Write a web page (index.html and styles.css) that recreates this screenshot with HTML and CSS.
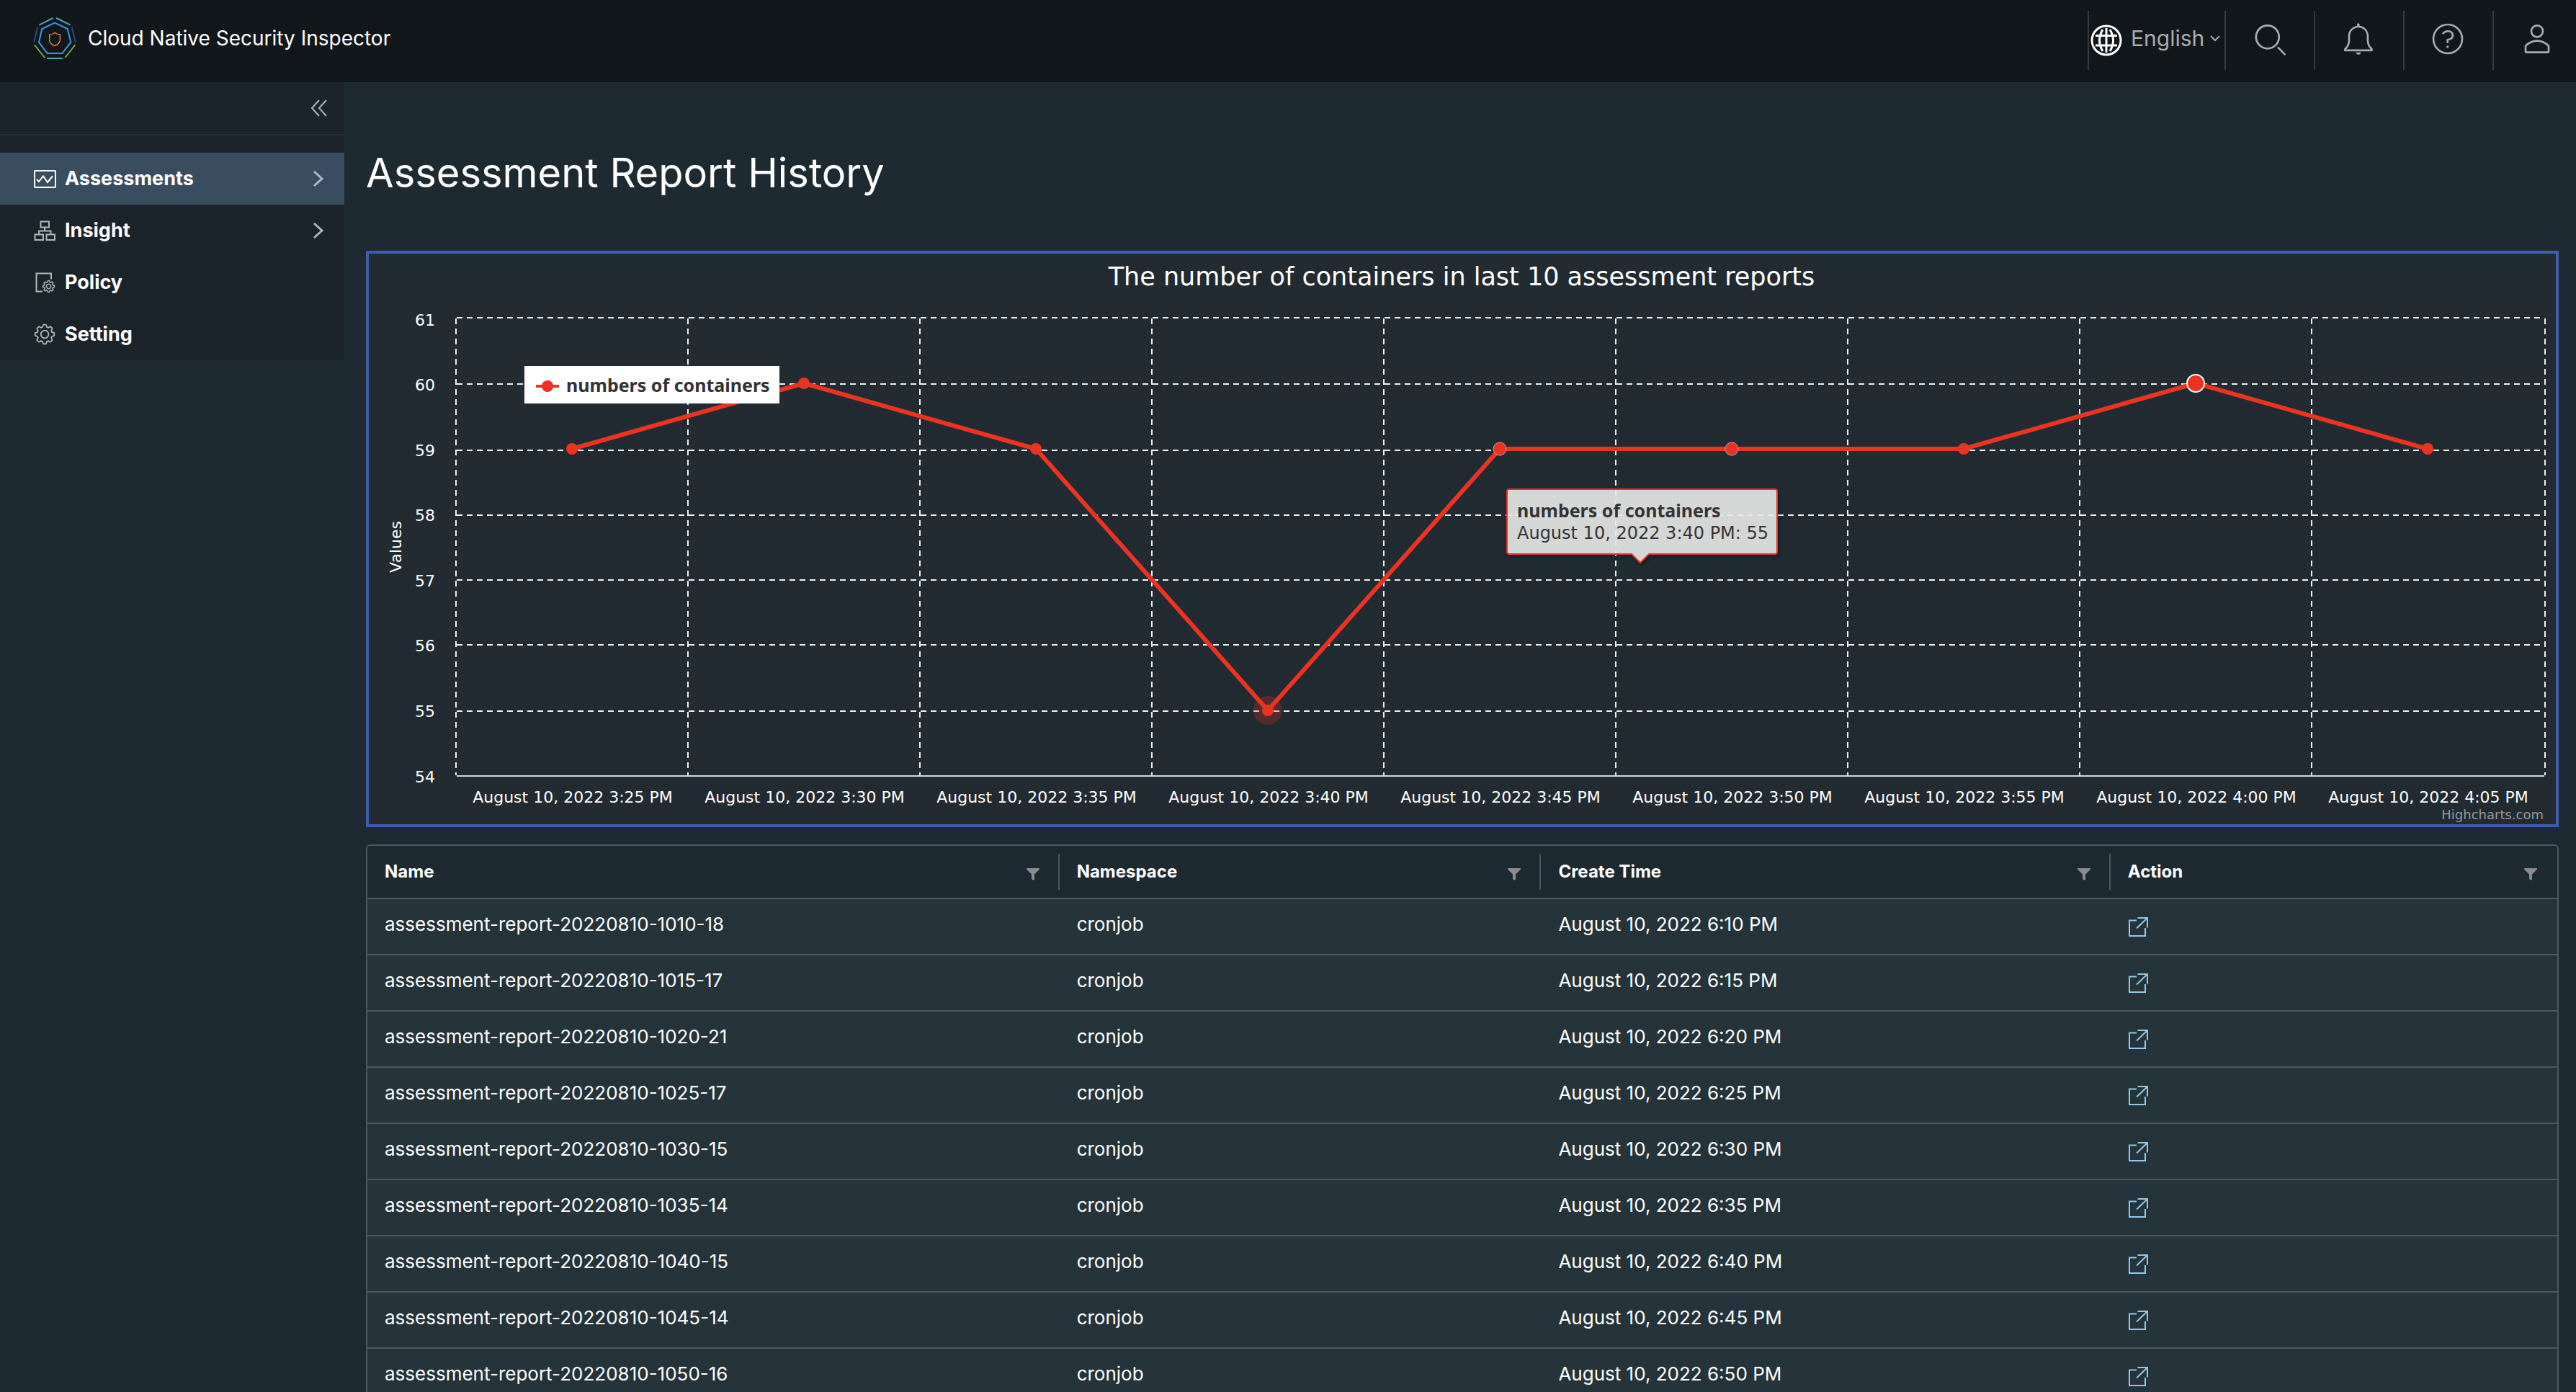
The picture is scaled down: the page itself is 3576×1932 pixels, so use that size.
FILE: index.html
```html
<!DOCTYPE html>
<html lang="en">
<head>
<meta charset="utf-8">
<meta name="viewport" content="width=device-width, initial-scale=1">
<title>Cloud Native Security Inspector</title>
<link rel="stylesheet" href="styles.css">
</head>
<body>
<svg class="sprite" aria-hidden="true">
  <symbol id="gear" viewBox="0 0 36 36">
    <path d="M18.1,11c-3.9,0-7,3.1-7,7s3.1,7,7,7c3.9,0,7-3.1,7-7S22,11,18.1,11z M18.1,23c-2.8,0-5-2.2-5-5s2.2-5,5-5c2.8,0,5,2.2,5,5S20.9,23,18.1,23z"/>
    <path d="M32.8,14.7L30,13.8l-0.6-1.5l1.4-2.6c0.3-0.6,0.2-1.4-0.3-1.9l-2.4-2.4c-0.5-0.5-1.3-0.6-1.9-0.3l-2.6,1.4l-1.5-0.6l-0.9-2.8C21,2.5,20.4,2,19.7,2h-3.4c-0.7,0-1.3,0.5-1.4,1.2L14,6c-0.6,0.1-1.1,0.3-1.6,0.6L9.8,5.2C9.2,4.9,8.4,5,7.9,5.5L5.5,7.9C5,8.4,4.9,9.2,5.2,9.8l1.3,2.5c-0.2,0.5-0.4,1.1-0.6,1.6l-2.8,0.9C2.5,15,2,15.6,2,16.3v3.4c0,0.7,0.5,1.3,1.2,1.5L6,22.1l0.6,1.5l-1.4,2.6c-0.3,0.6-0.2,1.4,0.3,1.9l2.4,2.4c0.5,0.5,1.3,0.6,1.9,0.3l2.6-1.4l1.5,0.6l0.9,2.9c0.2,0.6,0.8,1.1,1.5,1.1h3.4c0.7,0,1.3-0.5,1.5-1.1l0.9-2.9l1.5-0.6l2.6,1.4c0.6,0.3,1.4,0.2,1.9-0.3l2.4-2.4c0.5-0.5,0.6-1.3,0.3-1.9l-1.4-2.6l0.6-1.5l2.9-0.9c0.6-0.2,1.1-0.8,1.1-1.5v-3.4C34,15.6,33.5,14.9,32.8,14.7z M32,19.4l-3.6,1.1L28.3,21c-0.3,0.7-0.6,1.4-0.9,2.1l-0.3,0.5l1.8,3.3l-2,2l-3.3-1.8l-0.5,0.3c-0.7,0.4-1.4,0.7-2.1,0.9l-0.5,0.1L19.4,32h-2.8l-1.1-3.6L15,28.3c-0.7-0.3-1.4-0.6-2.1-0.9l-0.5-0.3l-3.3,1.8l-2-2l1.8-3.3l-0.3-0.5c-0.4-0.7-0.7-1.4-0.9-2.1l-0.1-0.5L4,19.4v-2.8l3.4-1l0.2-0.5c0.2-0.8,0.5-1.5,0.9-2.2l0.3-0.5L7.1,9.1l2-2l3.2,1.8l0.5-0.3c0.7-0.4,1.4-0.7,2.2-0.9l0.5-0.2L16.6,4h2.8l1.1,3.5L21,7.7c0.7,0.2,1.4,0.5,2.1,0.9l0.5,0.3l3.3-1.8l2,2l-1.8,3.3l0.3,0.5c0.4,0.7,0.7,1.4,0.9,2.1l0.1,0.5l3.6,1.1V19.4z"/>
  </symbol>
  <symbol id="caret" viewBox="0 0 32 32"><path class="line-thick" d="M10 6 L21 16 L10 26"/></symbol>
  <symbol id="funnel" viewBox="0 0 18 18"><path d="M0 1H18V2.500L11 9.500V17L9 17.500L7 16V9.500L0 2.500Z"/></symbol>
  <symbol id="popout" viewBox="0 0 28 28"><path class="line" d="M12 5.500H2V27H24V16M13.500 2H27V15.500M27 2L12 16.500"/></symbol>
</svg>

<div class="app">
  <header class="header">
    <a class="brand" href="#">
      <svg class="logo" viewBox="48 36 180 180" aria-hidden="true">
        <g fill="none" stroke-width="6">
          <path stroke="#49a5b5" d="M73 71L131 42M144 42L203 71M105 210H171"/>
          <path stroke="#28468f" d="M66 80L52 143M209 80L225 143"/>
          <path stroke="#79a83a" d="M54 154L96 207M223 154L181 207"/>
          <path stroke="#3c96e6" d="M138 62L191 87L205 143L169 189H107L72 143L85 87Z"/>
          <path stroke="#ef8245" stroke-width="4" d="M138 103L147 108Q154 111 160 111V136Q158 149 138 158Q118 149 116 136V111Q122 111 130 108Z"/>
        </g>
      </svg>
      <span>Cloud Native Security Inspector</span>
    </a>
    <div class="tools">
      <div class="tool tool-lang">
        <svg class="globe" viewBox="0 0 44 44" aria-hidden="true">
          <circle cx="22" cy="22" r="20"/>
          <path d="M22 5V39M7 15.500H37M7 29H37M17 7Q8 22 17 37M27 7Q36 22 27 37"/>
        </svg>
        <select class="lang" aria-label="Language"><option>English</option></select>
        <svg class="lang-caret" viewBox="0 0 16 10" aria-hidden="true"><path d="M2 2L8 8L14 2"/></svg>
      </div>
      <button class="tool" aria-label="Search">
        <svg class="tool-icon" viewBox="0 0 36 36"><path d="M16.330,5.050A10.950,10.950,0,1,1,5.390,16,11,11,0,0,1,16.330,5.050m0-2.050a13,13,0,1,0,13,13,13,13,0,0,0-13-13Z"/><path d="M35,33.290l-7.370-7.420-1.420,1.410,7.370,7.420A1,1,0,1,0,35,33.290Z"/></svg>
      </button>
      <button class="tool" aria-label="Notifications">
        <svg class="tool-icon" viewBox="0 0 36 36"><path d="M32.510,27.830A14.400,14.400,0,0,1,30,24.900a12.630,12.630,0,0,1-1.350-4.810V15.150A10.810,10.810,0,0,0,19.210,4.400V3.110a1.330,1.330,0,1,0-2.670,0V4.420A10.810,10.810,0,0,0,7.210,15.150v4.940A12.630,12.630,0,0,1,5.860,24.900a14.400,14.400,0,0,1-2.470,2.930,1,1,0,0,0-.34.750v1.360a1,1,0,0,0,1,1h27.800a1,1,0,0,0,1-1V28.580A1,1,0,0,0,32.510,27.830ZM5.130,28.940a16.170,16.170,0,0,0,2.440-3,14.240,14.240,0,0,0,1.650-5.850V15.150a8.740,8.740,0,1,1,17.470,0v4.940a14.240,14.240,0,0,0,1.650,5.850,16.170,16.170,0,0,0,2.440,3Z"/><path d="M18,34.280A2.670,2.670,0,0,0,20.580,32H15.320A2.670,2.670,0,0,0,18,34.280Z"/></svg>
      </button>
      <button class="tool" aria-label="Help">
        <svg class="tool-icon" viewBox="0 0 36 36"><path d="M18,2A16,16,0,1,0,34,18,16,16,0,0,0,18,2Zm0,30A14,14,0,1,1,32,18,14,14,0,0,1,18,32Z"/><path d="M18.290,8.920a7.380,7.380,0,0,0-5.720,2.570,1,1,0,0,0-.32.710.92.920,0,0,0,.95.920,1.080,1.080,0,0,0,.71-.29,5.700,5.700,0,0,1,4.330-2c2.360,0,3.830,1.520,3.830,3.410v.05c0,2.210-1.760,3.440-4.540,3.650a.8.800,0,0,0-.76.920s0,2.320,0,2.750a1,1,0,0,0,1,.9h.11a1,1,0,0,0,.9-1V19.450c3-.42,5.430-2,5.430-5.280v-.05C24.180,11.120,21.840,8.920,18.290,8.920Z"/><circle cx="17.780" cy="26.200" r="1.250"/></svg>
      </button>
      <button class="tool" aria-label="Account">
        <svg class="tool-icon" viewBox="0 0 36 36"><path d="M18,17a7,7,0,1,0-7-7A7,7,0,0,0,18,17ZM18,5a5,5,0,1,1-5,5A5,5,0,0,1,18,5Z"/><path d="M30.470,24.370a17.160,17.160,0,0,0-24.930,0A2,2,0,0,0,5,25.740V31a2,2,0,0,0,2,2H29a2,2,0,0,0,2-2V25.740A2,2,0,0,0,30.470,24.370ZM29,31H7V25.730a15.170,15.170,0,0,1,22,0h0Z"/></svg>
      </button>
    </div>
  </header>

  <div class="body">
    <nav class="sidebar" aria-label="Main">
      <button class="collapse" aria-label="Collapse menu">
        <svg class="nav-icon" viewBox="0 0 32 32"><path class="line" d="M17 5L7 16L17 27M27 5L17 16L27 27"/></svg>
      </button>
      <ul class="nav">
        <li><a class="nav-link is-active" href="#">
          <svg class="nav-icon" viewBox="0 0 32 32"><rect class="line" x="2" y="5" width="29" height="23" rx="1"/><path class="line" d="M5 17L8 20L14 12.500L20 21L27 12.500"/></svg>
          <span>Assessments</span><svg class="nav-caret"><use href="#caret"/></svg></a></li>
        <li><a class="nav-link" href="#">
          <svg class="nav-icon" viewBox="0 0 32 32"><path class="line" d="M10.500 3.500H22V11.500H10.500ZM2.500 21.500H14V29H2.500ZM18.500 21.500H30V29H18.500ZM16 11.500V16.500M8 21V16.500H24.500V21"/></svg>
          <span>Insight</span><svg class="nav-caret"><use href="#caret"/></svg></a></li>
        <li><a class="nav-link" href="#">
          <svg class="nav-icon" viewBox="0 0 32 32"><path class="line" d="M25 11.500V3.500H4.500V28.500H13"/><use class="bold-gear" href="#gear" x="12" y="12" width="19" height="19"/></svg>
          <span>Policy</span></a></li>
        <li><a class="nav-link" href="#">
          <svg class="nav-icon"><use href="#gear"/></svg>
          <span>Setting</span></a></li>
      </ul>
    </nav>

    <main class="main">
      <h1 class="title">Assessment Report History</h1>

      <section class="chart">
        <svg class="chart-svg" viewBox="0 0 3036 792" role="img" aria-label="The number of containers in last 10 assessment reports">
          <path class="grid" d="M121 90V724M443 90V724M765 90V724M1087 90V724M1409 90V724M1731 90V724M2053 90V724M2375 90V724M2697 90V724M3021 90V724"/>
          <path class="grid" d="M122 89H3020M122 181H3020M122 273H3020M122 363H3020M122 453H3020M122 543H3020M122 635H3020"/>
          <path class="axis" d="M122 725H3020"/>
          <text class="chart-title" x="1517" y="44">The number of containers in last 10 assessment reports</text>
          <text class="axis-title" transform="translate(45 407) rotate(-90)">Values</text>
          <g class="y-labels">
            <text x="92" y="100">61</text><text x="92" y="190">60</text><text x="92" y="281">59</text><text x="92" y="371">58</text>
            <text x="92" y="462">57</text><text x="92" y="552">56</text><text x="92" y="643">55</text><text x="92" y="734">54</text>
          </g>
          <g class="x-labels">
            <text x="283" y="762">August 10, 2022 3:25 PM</text>
            <text x="605" y="762">August 10, 2022 3:30 PM</text>
            <text x="927" y="762">August 10, 2022 3:35 PM</text>
            <text x="1249" y="762">August 10, 2022 3:40 PM</text>
            <text x="1571" y="762">August 10, 2022 3:45 PM</text>
            <text x="1893" y="762">August 10, 2022 3:50 PM</text>
            <text x="2215" y="762">August 10, 2022 3:55 PM</text>
            <text x="2537" y="762">August 10, 2022 4:00 PM</text>
            <text x="2859" y="762">August 10, 2022 4:05 PM</text>
          </g>
          <polyline class="series" points="282,271 604,180 926,271 1248,634 1570,271 1892,271 2214,271 2536,180 2858,271"/>
          <g class="points">
            <circle class="halo" cx="1248" cy="634" r="20"/>
            <circle cx="282" cy="271" r="8"/><circle cx="604" cy="180" r="8"/><circle cx="926" cy="271" r="8"/>
            <circle cx="1248" cy="634" r="8"/>
            <circle class="fading" cx="1570" cy="271" r="9"/><circle class="fading" cx="1892" cy="271" r="9"/>
            <circle cx="2214" cy="271" r="8"/>
            <circle class="hover" cx="2536" cy="180" r="12"/>
            <circle cx="2858" cy="271" r="8"/>
          </g>
          <g class="legend">
            <rect x="216" y="156" width="354" height="52"/>
            <path d="M232 184H264"/>
            <circle cx="248" cy="184" r="8"/>
            <text x="274" y="192">numbers of containers</text>
          </g>
          <g class="tooltip">
            <path d="M1583 327H1952Q1955 327 1955 330V414Q1955 417 1952 417H1777L1765 429L1753 417H1583Q1580 417 1580 414V330Q1580 327 1583 327Z"/>
            <text class="strong" x="1594" y="366">numbers of containers</text>
            <text x="1594" y="396">August 10, 2022 3:40 PM: 55</text>
          </g>
          <a href="#"><text class="credits" x="3019" y="785">Highcharts.com</text></a>
        </svg>
      </section>

      <div class="grid-wrap">
        <table class="reports">
          <colgroup><col class="col-name"><col class="col-ns"><col class="col-time"><col></colgroup>
          <thead>
            <tr>
              <th scope="col"><div class="head">Name<button class="filter" aria-label="Filter by name"><svg><use href="#funnel"/></svg></button></div></th>
              <th scope="col"><div class="head">Namespace<button class="filter" aria-label="Filter by namespace"><svg><use href="#funnel"/></svg></button></div></th>
              <th scope="col"><div class="head">Create Time<button class="filter" aria-label="Filter by create time"><svg><use href="#funnel"/></svg></button></div></th>
              <th scope="col"><div class="head">Action<button class="filter" aria-label="Filter by action"><svg><use href="#funnel"/></svg></button></div></th>
            </tr>
          </thead>
          <tbody>
            <tr><td>assessment-report-20220810-1010-18</td><td>cronjob</td><td>August 10, 2022 6:10 PM</td><td><a class="open" href="#" aria-label="Open report"><svg><use href="#popout"/></svg></a></td></tr>
            <tr><td>assessment-report-20220810-1015-17</td><td>cronjob</td><td>August 10, 2022 6:15 PM</td><td><a class="open" href="#" aria-label="Open report"><svg><use href="#popout"/></svg></a></td></tr>
            <tr><td>assessment-report-20220810-1020-21</td><td>cronjob</td><td>August 10, 2022 6:20 PM</td><td><a class="open" href="#" aria-label="Open report"><svg><use href="#popout"/></svg></a></td></tr>
            <tr><td>assessment-report-20220810-1025-17</td><td>cronjob</td><td>August 10, 2022 6:25 PM</td><td><a class="open" href="#" aria-label="Open report"><svg><use href="#popout"/></svg></a></td></tr>
            <tr><td>assessment-report-20220810-1030-15</td><td>cronjob</td><td>August 10, 2022 6:30 PM</td><td><a class="open" href="#" aria-label="Open report"><svg><use href="#popout"/></svg></a></td></tr>
            <tr><td>assessment-report-20220810-1035-14</td><td>cronjob</td><td>August 10, 2022 6:35 PM</td><td><a class="open" href="#" aria-label="Open report"><svg><use href="#popout"/></svg></a></td></tr>
            <tr><td>assessment-report-20220810-1040-15</td><td>cronjob</td><td>August 10, 2022 6:40 PM</td><td><a class="open" href="#" aria-label="Open report"><svg><use href="#popout"/></svg></a></td></tr>
            <tr><td>assessment-report-20220810-1045-14</td><td>cronjob</td><td>August 10, 2022 6:45 PM</td><td><a class="open" href="#" aria-label="Open report"><svg><use href="#popout"/></svg></a></td></tr>
            <tr><td>assessment-report-20220810-1050-16</td><td>cronjob</td><td>August 10, 2022 6:50 PM</td><td><a class="open" href="#" aria-label="Open report"><svg><use href="#popout"/></svg></a></td></tr>
          </tbody>
        </table>
      </div>
    </main>
  </div>
</div>
</body>
</html>
```
FILE: styles.css
```css
* { box-sizing: border-box; }

body {
  margin: 0;
  background: #1e2a31;
  color: #fff;
  font: 26px/40px Inter, "Liberation Sans", sans-serif;
}

a { color: inherit; text-decoration: none; }
button, select { font: inherit; color: inherit; background: none; border: 0; padding: 0; cursor: pointer; }
svg { display: block; fill: currentColor; flex: none; }

.sprite { display: none; }
.line { fill: none; stroke: currentColor; stroke-width: 2; }
.line-thick { fill: none; stroke: currentColor; stroke-width: 3; }

.app { display: flex; flex-direction: column; height: 100vh; overflow: hidden; }

/* Header */
.header {
  display: flex;
  flex: none;
  justify-content: space-between;
  height: 114px;
  padding-bottom: 8px;
  background: #12171b;
}
.brand { display: flex; align-items: center; gap: 16px; padding-left: 46px; font-size: 28px; }
.logo { width: 60px; height: 60px; }
.tools { display: flex; margin-top: 15px; height: 82px; color: #aaacae; }
.tool {
  display: flex;
  align-items: center;
  width: 124px;
  padding: 0 36px 4px;
  border-left: 2px solid #343a3f;
}
.tool:last-child { width: 116px; }
.tool-icon { width: 48px; height: 48px; }
.tool-lang { width: 190px; padding: 0 0 0 2px; }
.globe { width: 44px; height: 44px; fill: none; stroke: #fff; stroke-width: 3; }
.lang { appearance: none; margin-left: 12px; padding-bottom: 6px; font-size: 30px; }
.lang-caret { width: 16px; height: 10px; margin: 0 0 6px 6px; fill: none; stroke: currentColor; stroke-width: 2; }

/* Sidebar */
.body { display: flex; flex: 1; align-items: flex-start; min-height: 0; }
.sidebar { flex: none; width: 478px; background: #1c242b; color: #aeb8bc; }
.collapse {
  display: flex;
  align-items: center;
  justify-content: flex-end;
  width: 100%;
  height: 74px;
  padding-right: 20px;
  border-bottom: 2px solid #262f36;
}
.nav { list-style: none; margin: 0; padding: 24px 0 0; }
.nav-link {
  display: flex;
  align-items: center;
  gap: 12px;
  height: 72px;
  padding: 0 20px 0 46px;
}
.nav-link span { flex: 1; color: #fff; font-weight: 700; font-size: 27px; }
.nav-link.is-active { background: #394d60; }
.nav-link.is-active .nav-icon { color: #fff; }
.nav-icon, .nav-caret { width: 32px; height: 32px; }
.bold-gear { stroke: currentColor; stroke-width: 1; }

/* Main column */
.main {
  flex: 1;
  min-width: 0;
  height: 100%;
  padding: 86px 24px 0 30px;
  overflow-y: auto;
  scrollbar-width: none;
}
.title { margin: 0 0 68px; font-size: 56px; line-height: 80px; font-weight: 400; }

/* Chart */
.chart { margin-bottom: 24px; border: 4px solid #3d5ea9; background: #212b31; }
.chart-svg { width: 100%; height: auto; font-family: "DejaVu Sans", "Noto Sans", sans-serif; font-size: 22px; }
.chart-svg text { fill: #fff; }
.chart-svg .chart-title { font-size: 35px; text-anchor: middle; }
.axis-title { text-anchor: middle; }
.y-labels { text-anchor: end; }
.x-labels { text-anchor: middle; }
.grid { fill: none; stroke: #f0f0f0; stroke-width: 2; stroke-dasharray: 8 6; }
.axis { stroke: #ccd6eb; stroke-width: 2; }
.series { fill: none; stroke: #eb3323; stroke-width: 6; stroke-linejoin: round; }
.points { fill: #eb3323; }
.points .halo { opacity: 0.25; }
.points .fading { stroke: #c9a5a2; stroke-width: 1; }
.points .hover { stroke: #fff; stroke-width: 2; }
.legend rect { fill: #fff; }
.legend path { stroke: #eb3323; stroke-width: 4; }
.legend circle { fill: #eb3323; }
.tooltip path { fill: #f7f7f7; fill-opacity: 0.85; stroke: #eb3323; stroke-width: 2; filter: drop-shadow(2px 2px 2px #0006); }
.chart-svg .tooltip text { fill: #333; font-size: 24px; }
.chart-svg .legend text,
.chart-svg .tooltip .strong { fill: #333; font: 700 25px "Noto Sans", sans-serif; }
.chart-svg .credits { fill: #999; font-size: 18px; text-anchor: end; }

/* Reports table */
.grid-wrap { border: 2px solid #4a5963; border-radius: 6px; overflow: hidden; }
.reports { width: 100%; table-layout: fixed; border-collapse: separate; border-spacing: 0; }
.col-name { width: 31.6%; }
.col-ns { width: 22%; }
.col-time { width: 26%; }
.reports th { height: 74px; padding: 0; border-bottom: 2px solid #4a5963; text-align: left; font-size: 24px; font-weight: 700; }
.head {
  display: flex;
  align-items: center;
  justify-content: space-between;
  height: 50px;
  padding: 0 26px 0 24px;
  border-right: 2px solid #4a5963;
}
th:last-child .head { border-right-color: transparent; }
.filter { padding-top: 6px; color: #8c8c8c; }
.filter svg { width: 18px; height: 18px; }
.reports td { height: 78px; padding: 0 24px 6px; border-bottom: 2px solid #4a5963; background: #25333a; }
.open { display: block; width: 28px; padding-top: 6px; color: #8fcbea; }
.open svg { width: 28px; height: 28px; }
```
